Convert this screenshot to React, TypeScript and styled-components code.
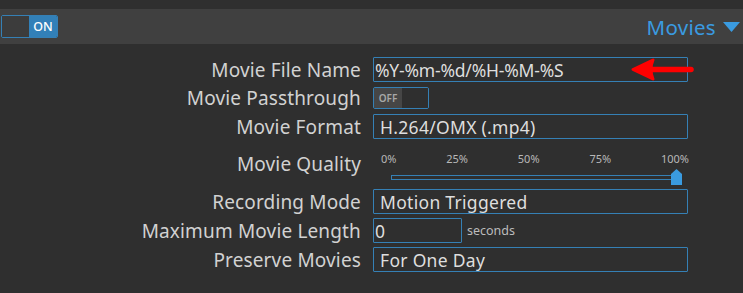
import React from 'react';
import styled, { createGlobalStyle } from 'styled-components';

const GlobalStyle = createGlobalStyle`
  html, body {
    margin: 0;
    padding: 0;
    background: #2f2f2f;
    font-family: "Noto Sans", "Open Sans", sans-serif;
    overflow: hidden;
  }
`;

const Page = styled.div`
  width: 743px;
  height: 293px;
  padding-top: 9px;
  box-sizing: border-box;
  background: #2f2f2f;
`;

const SectionBar = styled.div`
  height: 35px;
  background: #404040;
  display: flex;
  align-items: center;
  justify-content: space-between;
  padding: 0 3px 0 1px;
`;

const Switch = styled.div<{ on?: boolean }>`
  width: ${({ on }) => (on ? '57px' : '56px')};
  height: ${({ on }) => (on ? '23px' : '22px')};
  box-sizing: border-box;
  border: 1px solid #3580b5;
  border-radius: 2px;
  display: flex;
  flex-direction: ${({ on }) => (on ? 'row' : 'row-reverse')};
  overflow: hidden;
  background: #2f2f2f;
`;

const SwitchKnob = styled.div<{ on?: boolean }>`
  flex: 1;
  background: ${({ on }) => (on ? '#3c3c3c' : '#2f2f2f')};
`;

const SwitchLabel = styled.div<{ on?: boolean }>`
  width: 28px;
  display: flex;
  align-items: center;
  justify-content: center;
  background: ${({ on }) => (on ? '#3280b8' : '#464646')};
  color: ${({ on }) => (on ? '#ffffff' : '#a8a8a8')};
  font-size: ${({ on }) => (on ? '12.5px' : '10px')};
  font-weight: ${({ on }) => (on ? 500 : 600)};
`;

const SectionTitle = styled.div`
  display: flex;
  align-items: center;
  gap: 7px;
  color: #3a9be0;
  font-size: 20.5px;
  letter-spacing: 0.3px;
`;

const Rows = styled.div`
  padding-top: 11px;
  display: flex;
  flex-direction: column;
`;

const Row = styled.div<{ h?: number }>`
  display: grid;
  grid-template-columns: 361px 315px;
  column-gap: 12px;
  align-items: center;
  height: ${({ h }) => h || 29}px;
`;

const Label = styled.div`
  text-align: right;
  color: #d2d2d2;
  font-size: 19px;
  letter-spacing: 0.15px;
  line-height: 22px;
  white-space: nowrap;
`;

const Control = styled.div`
  display: flex;
  align-items: center;
  gap: 5px;
  position: relative;
`;

const Field = styled.div<{ w?: number; select?: boolean }>`
  width: ${({ w }) => (w ? `${w}px` : '100%')};
  height: 25px;
  box-sizing: border-box;
  border: 1px solid #3580b5;
  border-radius: 1px;
  display: flex;
  align-items: center;
  padding: 0 ${({ select }) => (select ? '6px' : '1px')};
  color: #dedede;
  font-size: 17.5px;
  letter-spacing: ${({ select }) => (select ? '0.3px' : '-0.2px')};
  white-space: nowrap;
`;

const Unit = styled.span`
  color: #bcbcbc;
  font-size: 12.5px;
`;

const Slider = styled.div`
  width: 100%;
  align-self: flex-start;
  padding-top: 4px;
  display: flex;
  flex-direction: column;
  gap: 10px;
`;

const Ticks = styled.div`
  display: flex;
  justify-content: space-between;
  padding: 0 0 0 8px;
  margin-right: -1px;
  color: #b8b8b8;
  font-size: 11px;
  line-height: 12px;
`;

const Track = styled.div`
  position: relative;
  margin: 0 6px 0 18px;
  height: 5px;
  box-sizing: border-box;
  border: 1px solid #3580b5;
`;

const Thumb = styled.svg`
  position: absolute;
  right: -1px;
  top: -7px;
`;

const Arrow = styled.svg`
  position: absolute;
  left: 257px;
  top: 1px;
`;

const App: React.FC = () => (
  <Page>
    <GlobalStyle />
    <SectionBar>
      <Switch on>
        <SwitchKnob on />
        <SwitchLabel on>ON</SwitchLabel>
      </Switch>
      <SectionTitle>
        Movies
        <svg width="17" height="10" viewBox="0 0 17 10">
          <polygon points="0,0 17,0 8.5,10" fill="#3a9be0" />
        </svg>
      </SectionTitle>
    </SectionBar>

    <Rows>
      <Row>
        <Label>Movie File Name</Label>
        <Control>
          <Field>%Y-%m-%d/%H-%M-%S</Field>
          <Arrow width="64" height="23" viewBox="0 0 64 23">
            <line x1="18" y1="11.5" x2="61" y2="11.5" stroke="#ff0000" strokeWidth="5.5" strokeLinecap="round" />
            <path d="M3,11.5 L23,2 Q19,11.5 23,21 Z" fill="#ff0000" stroke="#ff0000" strokeWidth="3" strokeLinejoin="round" />
          </Arrow>
        </Control>
      </Row>
      <Row h={28}>
        <Label>Movie Passthrough</Label>
        <Control>
          <Switch>
            <SwitchKnob />
            <SwitchLabel>OFF</SwitchLabel>
          </Switch>
        </Control>
      </Row>
      <Row>
        <Label>Movie Format</Label>
        <Control>
          <Field select>H.264/OMX (.mp4)</Field>
        </Control>
      </Row>
      <Row h={46}>
        <Label>Movie Quality</Label>
        <Control>
          <Slider>
            <Ticks>
              <span>0%</span>
              <span>25%</span>
              <span>50%</span>
              <span>75%</span>
              <span>100%</span>
            </Ticks>
            <Track>
              <Thumb width="11" height="16" viewBox="0 0 11 16">
                <polygon points="0,5 5.5,0 11,5 11,16 0,16" fill="#3a9be0" />
              </Thumb>
            </Track>
          </Slider>
        </Control>
      </Row>
      <Row>
        <Label>Recording Mode</Label>
        <Control>
          <Field select>Motion Triggered</Field>
        </Control>
      </Row>
      <Row>
        <Label>Maximum Movie Length</Label>
        <Control>
          <Field w={89}>0</Field>
          <Unit>seconds</Unit>
        </Control>
      </Row>
      <Row>
        <Label>Preserve Movies</Label>
        <Control>
          <Field select>For One Day</Field>
        </Control>
      </Row>
    </Rows>
  </Page>
);

export default App;
